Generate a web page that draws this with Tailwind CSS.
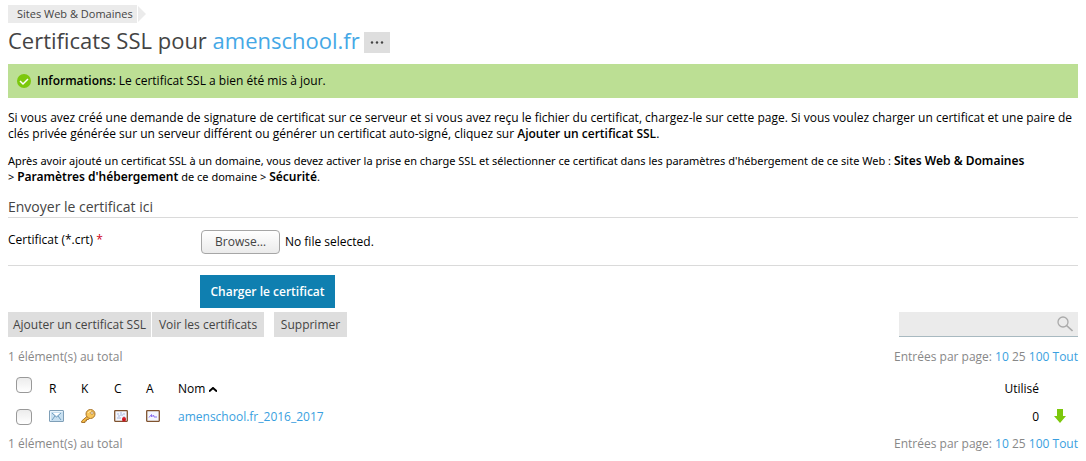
<!DOCTYPE html>
<html lang="fr">
<head>
    <meta charset="UTF-8">
    <meta name="viewport" content="width=device-width, initial-scale=1.0">
    <title>Certificats SSL pour amenschool.fr</title>
    <script src="https://cdn.jsdelivr.net/npm/@tailwindcss/browser@4"></script>
</head>
<body class="bg-white px-2 pt-[5px] pb-2 font-['Open_Sans','Noto_Sans',sans-serif] text-xs leading-4 text-black">

    <nav class="flex h-[18px] items-center text-[11px]">
        <a href="#" class="flex h-full w-[129px] items-center bg-[#ebebeb] pl-[9px] whitespace-nowrap text-[#444]">Sites Web &amp; Domaines</a>
        <svg class="ml-px h-4 w-2" viewBox="0 0 8 16" fill="#ebebeb"><path d="M0 0L8 8L0 16Z"/></svg>
    </nav>

    <header class="mt-[3px] flex items-center gap-1">
        <h1 class="text-[22px] leading-7 text-[#444]">Certificats SSL pour <a href="#" class="text-[#45a8e6]">amenschool.fr</a></h1>
        <button type="button" aria-label="Plus" class="mt-1 flex h-[21px] w-[26px] items-center justify-center bg-[#dedede] text-[#444]">
            <svg class="h-[3px] w-[14px]" viewBox="0 0 14 3" fill="currentColor"><circle cx="2" cy="1.5" r="1.2"/><circle cx="7" cy="1.5" r="1.2"/><circle cx="12" cy="1.5" r="1.2"/></svg>
        </button>
    </header>

    <div class="mt-[10px] flex h-[34px] items-center gap-[6px] bg-[#bcdf94] pl-[9px]">
        <svg class="size-[14px]" viewBox="0 0 14 14" fill="none"><circle cx="7" cy="7" r="7" fill="#7cc80c"/><path d="M3 7L6 10L11 5" stroke="#fff" stroke-width="1.5"/></svg>
        <p><b class="font-semibold">Informations:</b> Le certificat SSL a bien été mis à jour.</p>
    </div>

    <p class="mt-3">Si vous avez créé une demande de signature de certificat sur ce serveur et si vous avez reçu le fichier du certificat, chargez-le sur cette page. Si vous voulez charger un certificat et une paire de clés privée générée sur un serveur différent ou générer un certificat auto-signé, cliquez sur <b class="font-semibold">Ajouter un certificat SSL</b>.</p>
    <p class="mt-[11px] font-['Noto_Sans',sans-serif] text-[11px]">Après avoir ajouté un certificat SSL à un domaine, vous devez activer la prise en charge SSL et sélectionner ce certificat dans les paramètres d'hébergement de ce site Web : <b class="text-xs leading-4 font-semibold">Sites Web &amp; Domaines</b><br>&gt; <b class="text-xs leading-4 font-semibold">Paramètres d'hébergement</b> de ce domaine &gt; <b class="text-xs leading-4 font-semibold">Sécurité</b>.</p>

    <form>
        <h2 class="mt-3 border-b border-[#dadada] text-sm text-[#444]">Envoyer le certificat ici</h2>
        <div class="flex h-12 items-start border-b border-[#dadada] pt-3">
            <label for="cert-file" class="w-[193px] pt-[2px]">Certificat (*.crt) <span class="text-[#d0021b]">*</span></label>
            <input type="file" id="cert-file" class="sr-only">
            <label for="cert-file" class="flex h-6 w-[79px] items-center justify-center rounded-[4px] border border-[#a6a6a6] bg-linear-to-b from-white to-[#ebebeb] text-[#444]">Browse…</label>
            <span class="ml-[5px] self-start pt-1">No file selected.</span>
        </div>
        <button type="submit" class="mt-[9px] ml-48 block h-[33px] w-[135px] bg-[#0f7fb0] font-semibold text-white">Charger le certificat</button>
    </form>

    <div class="mt-1 flex h-[25px] justify-between">
        <div class="flex text-[#444]">
            <button type="button" class="w-[143px] bg-[#dedede] whitespace-nowrap">Ajouter un certificat SSL</button>
            <button type="button" class="ml-px w-28 bg-[#dedede] whitespace-nowrap">Voir les certificats</button>
            <button type="button" class="ml-[10px] w-[73px] bg-[#dedede]">Supprimer</button>
        </div>
        <div class="flex w-[179px] items-center border-b border-[#a8b9c0] bg-[#ebebeb] pr-[5px]">
            <input type="search" aria-label="Rechercher" class="h-full min-w-0 flex-1 bg-transparent px-2 outline-none">
            <svg class="size-4" viewBox="0 0 16 16" fill="none" stroke="#aaa" stroke-width="1.3"><circle cx="6" cy="6" r="5"/><path d="M9.500 9.500L15.500 15" stroke-width="1.600"/></svg>
        </div>
    </div>

    <div class="mt-3 flex justify-between text-[#888]">
        <span>1 élément(s) au total</span>
        <span>Entrées par page: <a href="#" class="text-[#3a9fe0]">10</a> 25 <a href="#" class="text-[#3a9fe0]">100</a> <a href="#" class="text-[#3a9fe0]">Tout</a></span>
    </div>

    <table class="mt-2 w-full table-fixed text-left">
        <colgroup><col class="w-[41px]"><col class="w-8"><col class="w-[33px]"><col class="w-8"><col class="w-8"><col><col class="w-20"><col class="w-[39px]"></colgroup>
        <thead>
            <tr class="h-8">
                <th class="pb-2 pl-2 align-middle"><input type="checkbox" aria-label="Tout sélectionner" class="block size-4 appearance-none rounded-[4px] border border-[#999] bg-linear-to-b from-[#ececec] to-white"></th>
                <th class="font-normal">R</th>
                <th class="font-normal">K</th>
                <th class="font-normal">C</th>
                <th class="font-normal">A</th>
                <th class="font-normal"><a href="#" class="inline-flex items-center gap-1">Nom <svg class="h-[5px] w-2" viewBox="0 0 8 5" fill="none" stroke="#000" stroke-width="2"><path d="M0 4.500L4 1L8 4.500"/></svg></a></th>
                <th class="text-right font-normal">Utilisé</th>
                <th></th>
            </tr>
        </thead>
        <tbody>
            <tr class="h-6">
                <td class="pl-2"><input type="checkbox" aria-label="Sélectionner amenschool.fr_2016_2017" class="block size-4 appearance-none rounded-[4px] border border-[#999] bg-linear-to-b from-[#ececec] to-white"></td>
                <td class="pb-[2px]">
                    <svg class="block size-4" viewBox="0 0 16 16" fill="none"><rect x=".5" y="2.500" width="14" height="11" rx=".5" fill="#c7dff0" stroke="#7f9fb7"/><path d="M1.500 12.500V3.500H13.500" stroke="#eaf5fc"/><path d="M3 5L7.500 9L12 5M3 12L6 8M12 12L9 8" stroke="#6f9dbd"/><path d="M4 5H11L7.500 8Z" fill="#fff"/></svg>
                </td>
                <td class="pb-[2px]">
                    <svg class="block size-4" viewBox="0 0 16 16" fill="none"><path d="M7 7.500L.7 13V14.500H4V13H5.500V11.500H7.500L9.500 9.500" fill="#f5bd48" stroke="#a8742c"/><circle cx="9.500" cy="6" r="4.500" fill="#f8c65a" stroke="#a8742c"/><path d="M7 5Q8 3 10 3" stroke="#ffe9a8"/><circle cx="11" cy="5" r="1.300" fill="#fff" stroke="#a8742c" stroke-width=".7"/></svg>
                </td>
                <td class="pb-[2px]">
                    <svg class="block size-4" viewBox="0 0 16 16" fill="none"><rect x=".7" y="2.700" width="12.600" height="10.600" rx=".5" fill="#f4f7ff" stroke="#80532f" stroke-width="1.300"/><path d="M3 6H5M6 5H8M9 6H11M4 8H6M6 7H9M9 9H11M3 10H7" stroke="#a6b5d8"/><circle cx="10" cy="11" r="2" fill="#d91e27"/><path d="M8.500 11V14L10 13L11.500 14V11Z" fill="#c91520"/></svg>
                </td>
                <td class="pb-[2px]">
                    <svg class="block size-4" viewBox="0 0 16 16" fill="none"><rect x=".7" y="2.700" width="12.600" height="10.600" rx=".5" fill="#f4f7ff" stroke="#80532f" stroke-width="1.300"/><path d="M3 9.500L5.500 6.500L5.500 9L7.500 7L8 9H11" stroke="#8d70ee"/></svg>
                </td>
                <td><a href="#" class="text-[#3a9fe0]">amenschool.fr_2016_2017</a></td>
                <td class="text-right">0</td>
                <td class="pb-[2px] pl-[15px]"><a href="#" aria-label="Télécharger"><svg class="block h-[14px] w-3" viewBox="0 0 12 14" fill="#7cc80c"><path d="M3 0H9V7H12L6 14L0 7H3Z"/></svg></a></td>
            </tr>
        </tbody>
    </table>

    <div class="mt-[7px] flex justify-between text-[#888]">
        <span>1 élément(s) au total</span>
        <span>Entrées par page: <a href="#" class="text-[#3a9fe0]">10</a> 25 <a href="#" class="text-[#3a9fe0]">100</a> <a href="#" class="text-[#3a9fe0]">Tout</a></span>
    </div>

</body>
</html>
